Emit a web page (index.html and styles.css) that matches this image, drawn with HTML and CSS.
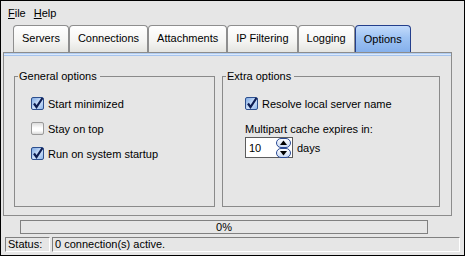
FILE: index.html
```html
<!DOCTYPE html>
<html lang="en">
<head>
    <meta charset="UTF-8">
    <title>Options</title>
<link rel="stylesheet" href="styles.css">
</head>
<body>
    <div class="window">
        <div class="menubar">
            <span class="menu"><u>F</u>ile</span>
            <span class="menu"><u>H</u>elp</span>
        </div>

        <div class="tabs">
            <div class="tab">Servers</div>
            <div class="tab">Connections</div>
            <div class="tab">Attachments</div>
            <div class="tab">IP Filtering</div>
            <div class="tab">Logging</div>
            <div class="tab active">Options</div>
        </div>

        <div class="panel">
            <fieldset class="group general">
                <legend>General options</legend>
                <div class="group-body">
                    <label class="check">
                        <span class="box checked"><svg width="13" height="13" viewBox="0 0 13 13"><path d="M3 6.5 L5.5 10 L11.5 1" /></svg></span>
                        Start minimized
                    </label>
                    <label class="check">
                        <span class="box"></span>
                        Stay on top
                    </label>
                    <label class="check">
                        <span class="box checked"><svg width="13" height="13" viewBox="0 0 13 13"><path d="M3 6.5 L5.5 10 L11.5 1" /></svg></span>
                        Run on system startup
                    </label>
                </div>
            </fieldset>

            <fieldset class="group extra">
                <legend>Extra options</legend>
                <div class="group-body">
                    <label class="check">
                        <span class="box checked"><svg width="13" height="13" viewBox="0 0 13 13"><path d="M3 6.5 L5.5 10 L11.5 1" /></svg></span>
                        Resolve local server name
                    </label>
                    <div class="caption">Multipart cache expires in:</div>
                    <div class="spin-row">
                        <div class="spinbox">
                            <span class="value">10</span>
                            <svg class="spin" width="15" height="20" viewBox="0 0 15 20">
                                <defs>
                                    <linearGradient id="btn" x1="0" y1="0" x2="0" y2="1">
                                        <stop offset="0" stop-color="#ffffff"/>
                                        <stop offset="1" stop-color="#c9d9f2"/>
                                    </linearGradient>
                                </defs>
                                <rect x="0.5" y="0.5" width="14" height="9" rx="4.5" fill="url(#btn)" stroke="#2a4a96"/>
                                <polygon points="4,7 11,7 7.5,2.5" fill="#000"/>
                                <rect x="0.5" y="10.5" width="14" height="9" rx="4.5" fill="url(#btn)" stroke="#2a4a96"/>
                                <polygon points="4,13 11,13 7.5,17.5" fill="#000"/>
                            </svg>
                        </div>
                        <span class="unit">days</span>
                    </div>
                </div>
            </fieldset>
        </div>

        <div class="progress">0%</div>

        <div class="statusbar">
            <div class="field name">Status:</div>
            <div class="field message">0 connection(s) active.</div>
        </div>
    </div>
</body>
</html>
```

FILE: styles.css
```css
body {
    margin: 0;
    background-color: #e6e6e6;
    color: #000;
    font-family: "Liberation Sans", Arial, sans-serif;
    font-size: 11px;
}

.window {
    width: 465px;
    height: 256px;
    box-sizing: border-box;
    border: 1px solid #000;
    background-color: #e6e6e6;
}

/* menu */
.menubar {
    height: 24px;
    line-height: 24px;
    padding-left: 7px;
    display: flex;
    gap: 8px;
}
.menu u {
    text-decoration: underline;
}

/* tabs */
.tabs {
    display: flex;
    height: 27px;
    margin-left: 12px;
}
.tab {
    box-sizing: border-box;
    height: 27px;
    line-height: 25px;
    padding: 0 8px;
    border: 1px solid #8e8e8e;
    border-bottom: none;
    border-radius: 4px 4px 0 0;
    background: linear-gradient(#ffffff, #f4f4f2 60%, #e4e4e0);
    text-align: center;
}
.tab.active {
    border-color: #243f8c;
    background: linear-gradient(#c3dbfb, #9ec3f3 45%, #85b0ec);
    line-height: 27px;
}

/* options panel */
.panel {
    box-sizing: border-box;
    width: 449px;
    height: 164px;
    margin-left: 2px;
    padding: 17px 11px 8px 10px;
    border: 1px solid #8c8c8c;
    background: linear-gradient(#9fc0ec, #dbe9fb 50%, #8cb2e7) top / 100% 3px no-repeat, #e6e6e6;
    display: flex;
    gap: 7px;
}

.group {
    margin: 0;
    padding: 9px 0 0 0;
    border: 1px solid #8a8a8a;
    min-width: 0;
}
.group legend {
    margin-left: 3px;
    padding: 0 3px 0 1px;
    line-height: 12px;
}
.general {
    width: 201px;
    box-sizing: border-box;
}
.general .group-body {
    padding-left: 16px;
}
.extra {
    flex: 1;
}
.extra .group-body {
    padding-left: 22px;
}

.check {
    display: flex;
    align-items: center;
    height: 25px;
    gap: 4px;
}
.box {
    box-sizing: border-box;
    width: 13px;
    height: 13px;
    border: 1px solid #9a9a9a;
    border-radius: 2px;
    background: linear-gradient(#dcdcdc, #ffffff 45%, #ffffff 70%, #d8d8d8);
    flex: none;
    position: relative;
}
.box.checked {
    border-color: #2d4f8e;
    background: linear-gradient(135deg, #7fa9e2, #cfe1fa 55%, #8fb6ea);
}
.box svg {
    position: absolute;
    left: -1px;
    top: -1px;
    overflow: visible;
}
.box path {
    fill: none;
    stroke: #0c1c52;
    stroke-width: 2.2;
}

.caption {
    margin-top: 6px;
    line-height: 14px;
}
.spin-row {
    display: flex;
    align-items: center;
    gap: 4px;
    margin-top: 1px;
}
.spinbox {
    box-sizing: border-box;
    width: 48px;
    height: 21px;
    border: 1px solid #5c5c5c;
    background-color: #fff;
    display: flex;
    align-items: center;
    justify-content: space-between;
    padding: 0 1px 0 3px;
}

/* progress and status */
.progress {
    box-sizing: border-box;
    width: 408px;
    height: 14px;
    margin: 4px 0 0 19px;
    border: 1px solid #808080;
    line-height: 12px;
    text-align: center;
}

.statusbar {
    display: flex;
    gap: 2px;
    margin: 3px 0 0 4px;
}
.field {
    box-sizing: border-box;
    height: 15px;
    line-height: 13px;
    padding-left: 2px;
    border: 1px solid #fff;
    border-top-color: #808080;
    border-left-color: #808080;
}
.field.name {
    width: 45px;
}
.field.message {
    width: 408px;
}
```
